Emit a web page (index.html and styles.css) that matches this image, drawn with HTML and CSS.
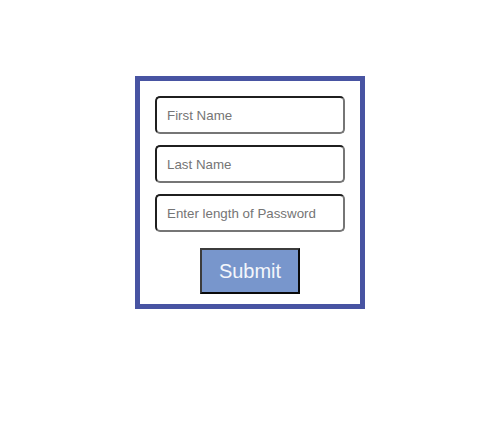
FILE: index.html
```html
<!DOCTYPE html>
<html>
<head>
<meta charset="utf-8">
<link rel="stylesheet" href="styles.css">
</head>
<body>
<div class="page">
  <form class="card">
    <input class="field" type="text" placeholder="First Name">
    <input class="field" type="text" placeholder="Last Name">
    <input class="field" type="text" placeholder="Enter length of Password">
    <button class="submit" type="button">Submit</button>
  </form>
</div>
</body>
</html>
```
FILE: styles.css
```css
html, body {
  margin: 0;
  padding: 0;
  background: #ffffff;
}
.page {
  padding: 76px 0 0 135px;
}
.card {
  box-sizing: border-box;
  width: 230px;
  height: 233px;
  border: 5px solid #4854a2;
  padding: 15px 15px 0 15px;
  display: flex;
  flex-direction: column;
  align-items: center;
  gap: 11px;
  margin: 0;
}
.field {
  box-sizing: border-box;
  width: 190px;
  height: 38px;
  margin: 0;
  padding: 0 10px;
  border-width: 2px;
  border-style: solid;
  border-color: #1f1f1f #767676 #767676 #1f1f1f;
  border-radius: 5px;
  font-family: "Liberation Sans", Arial, sans-serif;
  font-size: 13.3333px;
  color: #222;
  background: #fff;
  outline: none;
}
.field::placeholder {
  color: #757575;
}
.submit {
  box-sizing: border-box;
  width: 100px;
  height: 46px;
  margin-top: 5px;
  padding: 0;
  background: #7896cc;
  border-width: 2px;
  border-style: solid;
  border-color: #3c3c3c #0a0a0a #0a0a0a #3c3c3c;
  font-family: "Liberation Sans", Arial, sans-serif;
  font-size: 20px;
  color: #f4f6fb;
  cursor: pointer;
}
```
